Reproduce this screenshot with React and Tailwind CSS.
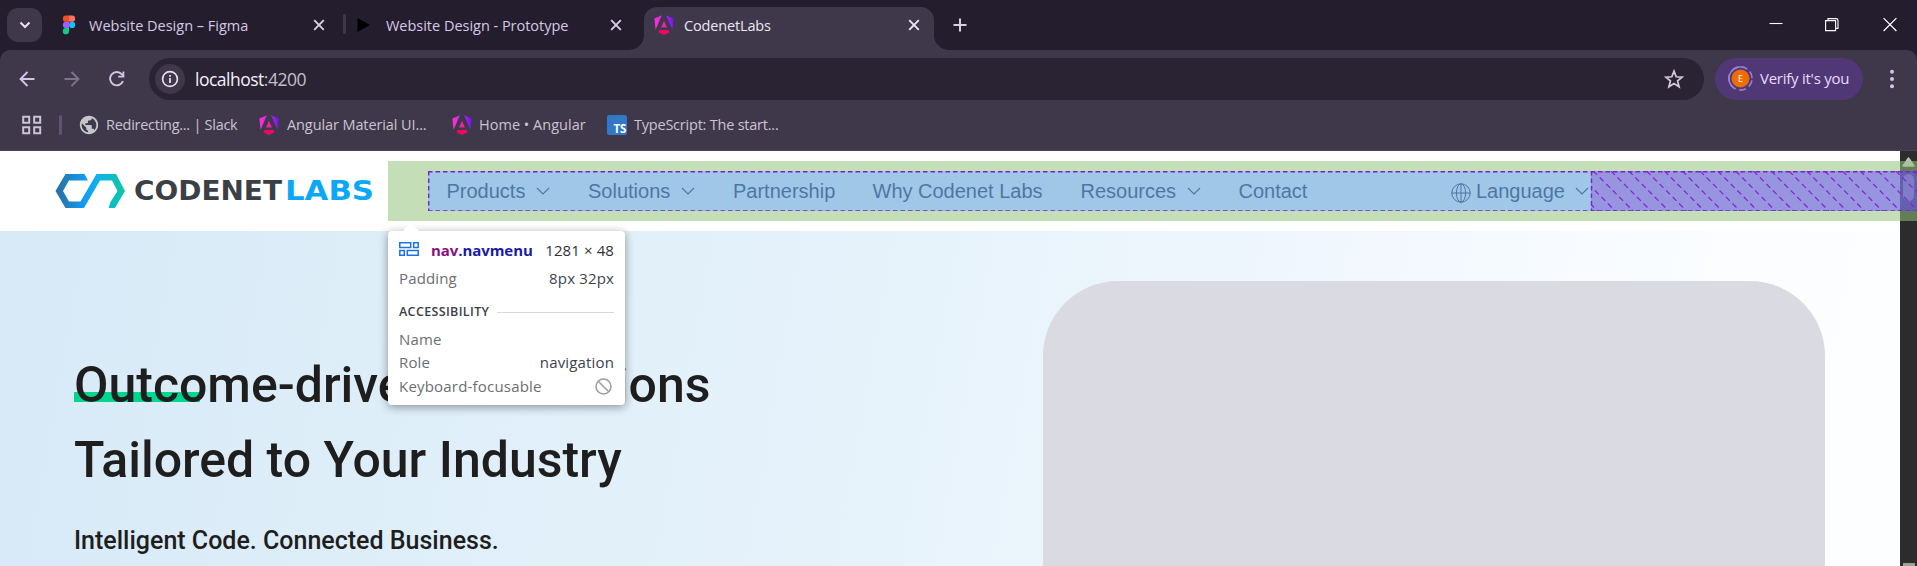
import React from 'react';

const ui = "font-['Open_Sans','Noto_Sans',sans-serif]";

const Angular = ({ id }) => (
  <svg width="20" height="20" viewBox="0 0 20 20" className="shrink-0">
    <defs>
      <linearGradient id={id} x1="0" y1="0.3" x2="1" y2="0.2">
        <stop offset="0" stopColor="#ff30d0" />
        <stop offset="0.5" stopColor="#c925e8" />
        <stop offset="1" stopColor="#6a14f5" />
      </linearGradient>
      <linearGradient id={id + 'b'} x1="0" y1="0" x2="1" y2="0">
        <stop offset="0" stopColor="#ff0050" />
        <stop offset="1" stopColor="#e80c78" />
      </linearGradient>
    </defs>
    <path d="M0.4 3.4 7.9 0.2 1.6 14.8ZM12.1 0.2 19.600 3.400 18.400 14.800Z" fill={`url(#${id})`} />
    <path d="M10 5.8 13 12.6H7Z" fill="#ee22a4" />
    <path d="M5.6 15H14.4L15.6 17.300 10 20 4.400 17.300Z" fill={`url(#${id}b)`} />
  </svg>
);

const Close = ({ color = '#d8cfe4' }) => (
  <svg width="12" height="12" viewBox="0 0 12 12" className="shrink-0">
    <path d="M1.2 1.2 10.8 10.8M10.8 1.2 1.2 10.8" stroke={color} strokeWidth="1.9" />
  </svg>
);

const Chevron = () => (
  <svg width="14" height="8" viewBox="0 0 14 8" className="shrink-0">
    <path d="M1 1 7 7 13 1" fill="none" stroke="#0e1830" strokeWidth="1.1" />
  </svg>
);

function TabStrip() {
  return (
    <div className="flex h-[50px] items-start bg-[#241d2e] text-[14.5px] text-[#d5cae3]">
      <div className="ml-[7px] mt-2 flex h-[34px] w-[35px] items-center justify-center rounded-[11px] bg-[#3f374a]">
        <svg width="12" height="8" viewBox="0 0 12 8">
          <path d="M1.5 1.5 6 6 10.5 1.5" fill="none" stroke="#e8e0f0" strokeWidth="2" />
        </svg>
      </div>
      <div className="flex h-[50px] w-[301px] items-center pl-5">
        <svg width="14" height="20" viewBox="0 0 14 20" className="shrink-0">
          <path d="M7 0.5H4A3 3 0 0 0 4 6.8H7Z" fill="#f24e1e" />
          <path d="M7 0.5H10A3 3 0 0 1 10 6.8H7Z" fill="#ff7262" />
          <path d="M7 6.8H4A3 3 0 0 0 4 13.1H7Z" fill="#a259ff" />
          <circle cx="10.1" cy="9.9" r="3.1" fill="#1abcfe" />
          <path d="M7 13.1H4A3.1 3.1 0 1 0 7 16.2Z" fill="#0acf83" />
        </svg>
        <span className="ml-[13px] w-[224px] whitespace-nowrap pt-px">Website Design – Figma</span>
        <Close />
      </div>
      <div className="mt-3.5 h-5 w-[3px] rounded-full bg-[#3f374a]" />
      <div className="flex h-[50px] w-[298px] items-center pl-[11px]">
        <svg width="14" height="14" viewBox="0 0 14 14" className="shrink-0">
          <path d="M0.5 0 13 7 0.5 14Z" fill="#000" />
        </svg>
        <span className="ml-[15px] w-[224px] whitespace-nowrap pt-px tracking-[-0.02px]">Website Design - Prototype</span>
        <Close />
      </div>
      <div className="relative mt-[7px] flex h-[43px] w-[290px] items-center rounded-t-[13px] bg-[#3f374a] pb-[7px] pl-2.5 text-[#ece6f3]">
        <svg width="15" height="15" viewBox="0 0 15 15" className="absolute -left-[15px] bottom-0">
          <path d="M15 0V15H0A15 15 0 0 0 15 0Z" fill="#3f374a" />
        </svg>
        <svg width="15" height="15" viewBox="0 0 15 15" className="absolute -right-[15px] bottom-0">
          <path d="M0 0V15H15A15 15 0 0 1 0 0Z" fill="#3f374a" />
        </svg>
        <Angular id="ng1" />
        <span className="ml-2.5 w-[224px] whitespace-nowrap pt-px tracking-[-0.15px]">CodenetLabs</span>
        <Close color="#ece6f3" />
      </div>
      <svg width="14" height="14" viewBox="0 0 14 14" className="ml-[19px] mt-[18px]">
        <path d="M7 0.5V13.5M0.5 7H13.5" stroke="#d8cfe4" strokeWidth="2" />
      </svg>
      <div className="ml-auto mr-5 mt-[17px] flex">
        <svg width="14" height="14" viewBox="0 0 14 14" className="mr-[42px]">
          <path d="M0.5 6.5H13.5" stroke="#fff" strokeWidth="1.1" />
        </svg>
        <svg width="14" height="15" viewBox="0 0 14 15" className="mr-[44px]">
          <path d="M0.6 3.6H10.6V13.6H0.6ZM3 3.4V1.6H11.2Q13 1.6 13 3.4V11.4H11" fill="none" stroke="#fff" strokeWidth="1.1" />
        </svg>
        <svg width="14" height="15" viewBox="0 0 14 15">
          <path d="M0.6 1.2 13.4 14M13.4 1.2 0.6 14" stroke="#fff" strokeWidth="1.2" />
        </svg>
      </div>
    </div>
  );
}

function AddressRow() {
  return (
    <div className="flex h-[57px] items-center">
      <svg width="16" height="16" viewBox="0 0 16 16" className="ml-[19px]">
        <path d="M15.5 8H1.5M8.5 1 1.5 8 8.5 15" fill="none" stroke="#d3c6e4" strokeWidth="1.9" />
      </svg>
      <svg width="16" height="16" viewBox="0 0 16 16" className="ml-[29px]">
        <path d="M0.5 8H14.5M7.5 1 14.5 8 7.5 15" fill="none" stroke="#7c7289" strokeWidth="1.9" />
      </svg>
      <svg width="16" height="16" viewBox="0 0 16 16" className="ml-[29px]">
        <path d="M14 10.2A6.7 6.7 0 1 1 12.9 3.3L14.5 5.2" fill="none" stroke="#d3c6e4" strokeWidth="1.9" />
        <path d="M15.3 0.5V6.6H9.2V4.8H13.5V0.5Z" fill="#d3c6e4" />
      </svg>
      <div className="ml-6 flex h-[42px] w-[1555px] items-center rounded-full bg-[#2a2334] pl-1.5">
        <div className="flex h-[30px] w-[30px] items-center justify-center rounded-full bg-[#3f374a]">
          <svg width="18" height="18" viewBox="0 0 18 18">
            <circle cx="9" cy="9" r="7.4" fill="none" stroke="#e8e0f0" strokeWidth="1.7" />
            <path d="M9 8V13M9 5V6.8" stroke="#e8e0f0" strokeWidth="1.8" />
          </svg>
        </div>
        <span className="ml-2.5 pt-px text-[17.5px] tracking-[-0.5px] text-[#c5bfcc]">
          <span className="text-[#f4f0f8]">localhost</span>:4200
        </span>
        <svg width="20" height="20" viewBox="0 0 24 24" className="ml-auto mr-5">
          <path d="M12 2.6 14.6 9.3 21.8 9.8 16.3 14.3 18.1 21.4 12 17.4 5.9 21.4 7.7 14.3 2.2 9.8 9.4 9.3Z" fill="none" stroke="#d3cbdd" strokeWidth="2.1" />
        </svg>
      </div>
      <div className="ml-[11px] flex h-[42px] w-[148px] items-center rounded-full bg-[#503877] pl-[13px] text-[15px] text-[#eadcfb]">
        <svg width="25" height="25" viewBox="0 0 25 25" className="shrink-0">
          <path d="M12.5 0.9A11.6 11.6 0 0 0 6 22.1" fill="none" stroke="#9a7fc9" strokeWidth="1.6" />
          <circle cx="12.5" cy="12.5" r="11.6" fill="none" stroke="#9a7fc9" strokeWidth="1.6" strokeDasharray="7 3.5" strokeDashoffset="-2" />
          <circle cx="12.5" cy="12.5" r="9" fill="#ef6c00" />
          <text x="12.5" y="16" textAnchor="middle" fontSize="9" fill="#fff" fontFamily="Open Sans">E</text>
        </svg>
        <span className="ml-[7px] whitespace-nowrap tracking-[-0.25px]">Verify it's you</span>
      </div>
      <svg width="6" height="20" viewBox="0 0 6 20" className="ml-[26px]">
        <circle cx="3" cy="2.8" r="2" fill="#d3c6e4" />
        <circle cx="3" cy="10" r="2" fill="#d3c6e4" />
        <circle cx="3" cy="17.2" r="2" fill="#d3c6e4" />
      </svg>
    </div>
  );
}

function Bookmarks() {
  return (
    <div className="flex h-[35px] items-center text-[14.5px] tracking-[-0.15px] text-[#cbc4d3]">
      <svg width="20" height="20" viewBox="0 0 20 20" className="ml-[22px]">
        <path d="M1.2 1.7H7.2V7.7H1.2ZM12.2 1.7H18.2V7.7H12.2ZM1.2 12.2H7.2V18.2H1.2ZM12.2 12.2H18.2V18.2H12.2Z" fill="none" stroke="#cbc4d3" strokeWidth="2" />
      </svg>
      <div className="ml-[17px] h-5 w-[3px] rounded-full bg-[#5f5570]" />
      <svg width="22" height="22" viewBox="0 0 24 24" className="ml-4">
        <path fill="#c4c7c9" d="M12 2C6.48 2 2 6.48 2 12s4.48 10 10 10 10-4.48 10-10S17.52 2 12 2zm-1 17.93c-3.95-.49-7-3.85-7-7.93 0-.62.08-1.21.21-1.79L9 15v1c0 1.1.9 2 2 2v1.930zm6.900-2.540c-.26-.81-1-1.390-1.900-1.390h-1v-3c0-.55-.45-1-1-1H8v-2h2c.55 0 1-.45 1-1V7h2c1.100 0 2-.9 2-2v-.41c2.930 1.190 5 4.060 5 7.410 0 2.080-.8 3.970-2.100 5.390z" />
      </svg>
      <span className="ml-1.5 w-[153px] whitespace-nowrap tracking-[-0.27px]">Redirecting... | Slack</span>
      <Angular id="ng2" />
      <span className="ml-2 w-[165px] whitespace-nowrap tracking-[-0.1px]">Angular Material UI...</span>
      <Angular id="ng3" />
      <span className="ml-[7px] w-32 whitespace-nowrap tracking-[0.02px]">Home • Angular</span>
      <div className="flex h-5 w-5 items-end justify-end rounded-[2px] bg-[#3178c6] pr-px text-[11.5px] font-bold leading-[13px] tracking-[-0.3px] text-white">TS</div>
      <span className="ml-[7px] whitespace-nowrap tracking-[-0.22px]">TypeScript: The start...</span>
    </div>
  );
}

function Logo() {
  return (
    <svg width="330" height="50" viewBox="0 0 330 50" className="ml-[50px] shrink-0">
      <defs>
        <linearGradient id="lg" gradientUnits="userSpaceOnUse" x1="6" y1="0" x2="75" y2="0">
          <stop offset="0" stopColor="#2a6f9e" />
          <stop offset="0.4" stopColor="#119bf2" />
          <stop offset="0.62" stopColor="#10b3e8" />
          <stop offset="1" stopColor="#0bc8a0" />
        </linearGradient>
      </defs>
      <path d="M15.500 8H34.500L38 14.500H19L13 25 19 35.500H30.500L46.500 8H66L75 25 65 42H58.500L60.500 36 67.500 25 62 14.500H50L34 42H15.500L5.500 25Z" fill="url(#lg)" />
      <text x="84" y="34" textLength="148" lengthAdjust="spacingAndGlyphs" fontFamily="DejaVu Sans" fontWeight="bold" fontSize="26" fill="#3a4046">CODENET</text>
      <text x="235" y="34" textLength="89" lengthAdjust="spacingAndGlyphs" fontFamily="DejaVu Sans" fontWeight="bold" fontSize="26" fill="#0ba9f5">LABS</text>
    </svg>
  );
}

const items = [
  ['Products', true, 'w-[141.500px]'],
  ['Solutions', true, 'w-[145px]'],
  ['Partnership', false, 'w-[139.500px]'],
  ['Why Codenet Labs', false, 'w-[208px]'],
  ['Resources', true, 'w-[158px]'],
  ['Contact', false, 'w-[212.500px]'],
];

function Header() {
  return (
    <header className="flex h-20 items-center bg-white font-['Liberation_Sans',Arial,sans-serif] text-[20px] leading-[30px] text-[#0a1430]">
      <Logo />
      <nav className="flex items-center pl-[66.500px]">
        {items.map(([label, chev, w]) => (
          <div key={label} className={`flex items-center gap-[11px] whitespace-nowrap ${w}`}>
            {label}
            {chev && <Chevron />}
          </div>
        ))}
        <svg width="20" height="20" viewBox="0 0 20 20" fill="none" stroke="#0e1830" strokeWidth="1" className="mt-[3px]">
          <circle cx="10" cy="10" r="9.2" />
          <ellipse cx="10" cy="10" rx="4.600" ry="9.200" />
          <path d="M10 0.800V19.200M0.800 10H19.200" />
        </svg>
        <span className="ml-[5px] mr-[10.500px]">Language</span>
        <Chevron />
      </nav>
    </header>
  );
}

const hatchStarts = Array.from({ length: 21 }, (_, i) => 1129.6 + i * 17.8);

function InspectOverlay() {
  return (
    <div className="absolute left-[388px] top-2.5 h-[60px] w-[1529px] border-y-[10px] border-l-[40px] border-[#93c47d]/55">
      <div className="flex h-10 w-full bg-[#6fa8dc]/66">
        <svg width="1489" height="40">
          <clipPath id="free">
            <rect x="1163" width="326" height="40" />
          </clipPath>
          <g clipPath="url(#free)">
            <rect x="1163" width="326" height="40" fill="#8114cb" fillOpacity="0.27" />
            {hatchStarts.map((x) => (
              <path key={x} d={`M${x} 0l40 40`} stroke="#8427d2" strokeWidth="1.300" strokeDasharray="5.500 3.700" />
            ))}
          </g>
          <path d="M0 0.700H1489M0 40H1489M0.700 0V40M1163.500 0V40" stroke="#7c1fcd" strokeWidth="1.4" strokeDasharray="4.500 3" />
        </svg>
      </div>
    </div>
  );
}

function Tooltip() {
  return (
    <div className={`absolute left-[388px] top-20 h-[174px] w-[237px] rounded-[4px] bg-white px-[11px] text-[15px] text-[#6b6f73] shadow-[0_2px_10px_rgba(0,0,0,0.4)] ${ui}`}>
      <svg width="18" height="10" viewBox="0 0 18 10" className="absolute -top-[9px] left-[14px]">
        <path d="M0 10 9 0 18 10Z" fill="#fff" />
      </svg>
      <div className="flex h-[39px] items-center">
        <svg width="20" height="14" viewBox="0 0 20 14" fill="none" stroke="#1a73e8" strokeWidth="1.500" className="-mt-1 shrink-0">
          <path d="M0.800 0.800H11.700V5.400H0.800ZM14.700 0.800H19.200V5.400H14.700ZM0.800 8.500H5.300V13.200H0.800ZM8.300 8.500H19.200V13.200H8.300Z" />
        </svg>
        <span className="ml-3 font-bold tracking-[-0.07px] text-[#1a1aa6]"><span className="text-[#881280]">nav</span>.navmenu</span>
        <span className="ml-auto whitespace-nowrap tracking-[0.1px] text-[#303336]">1281 × 48</span>
      </div>
      <div className="flex h-[16px] items-center justify-between tracking-[0.15px]"><span>Padding</span><span className="text-[#3c4450]">8px 32px</span></div>
      <div className="mt-[15px] flex h-[22px] items-center text-[12.5px] font-semibold tracking-[0.35px] text-[#3c4043]">ACCESSIBILITY<span className="ml-2 mt-px h-px flex-1 bg-[#d6d8db]" /></div>
      <div className="mt-[4px] flex h-[24px] items-center tracking-[0.15px]">Name</div>
      <div className="flex h-[23px] items-center justify-between tracking-[0.15px]"><span>Role</span><span className="text-[#3c4450]">navigation</span></div>
      <div className="flex h-[25px] items-center justify-between">
        <span className="tracking-[0.2px]">Keyboard-focusable</span>
        <svg width="17" height="17" viewBox="0 0 17 17" fill="none" stroke="#9a9ca0" strokeWidth="1.500" className="mr-0.5">
          <circle cx="8.500" cy="8.500" r="7.500" />
          <path d="M3.200 3.200 13.800 13.800" />
        </svg>
      </div>
    </div>
  );
}

function Hero() {
  return (
    <section className="flex h-[335px] justify-between overflow-hidden bg-[linear-gradient(100deg,#d7eaf7_0%,#e7f3fb_48%,#f0f7fe_67%,#fbfdff_88%,#fdfeff_100%)] pl-[74px] pr-[75px] font-['Roboto',sans-serif] font-medium text-[#1e1e1e]">
      <div className="pt-[117px]">
        <h1 className="whitespace-nowrap text-[50px] leading-[75px]">
          <span className="bg-[linear-gradient(#00d68f,#00d68f)] bg-[length:126px_10px] bg-[position:0_36px] bg-no-repeat">Outcome-driven IT Solutions</span>
          <br />
          Tailored to Your Industry
        </h1>
        <p className="mt-[24px] text-[25px] leading-[38px]">Intelligent Code. Connected Business.</p>
      </div>
      <div className="mt-[50px] h-[500px] w-[782px] rounded-[75px] bg-[#dadae3]" />
    </section>
  );
}

export default function App() {
  return (
    <div className={`flex h-[566px] w-[1917px] flex-col overflow-hidden bg-[#241d2e] ${ui}`}>
      <TabStrip />
      <div className="h-[101px] rounded-t-[10px] border-b border-[#4a4355] bg-[#3f374a]">
        <AddressRow />
        <Bookmarks />
      </div>
      <div className="relative flex h-[415px]">
        <main className="w-[1900px]">
          <Header />
          <Hero />
        </main>
        <div className="flex w-[17px] flex-col items-center bg-[#2c2c2c] pt-1.5">
          <svg width="13" height="10" viewBox="0 0 13 10">
            <path d="M6.500 1 12 9H1Z" fill="#c0c0c0" stroke="#c0c0c0" strokeWidth="1.500" strokeLinejoin="round" />
          </svg>
          <div className="mt-[7px] h-[27px] w-[11px] rounded-full bg-[#9f9f9f]" />
          <div className="mt-auto h-[3px] w-3 bg-[#9f9f9f]" />
        </div>
        <InspectOverlay />
        <Tooltip />
      </div>
    </div>
  );
}
